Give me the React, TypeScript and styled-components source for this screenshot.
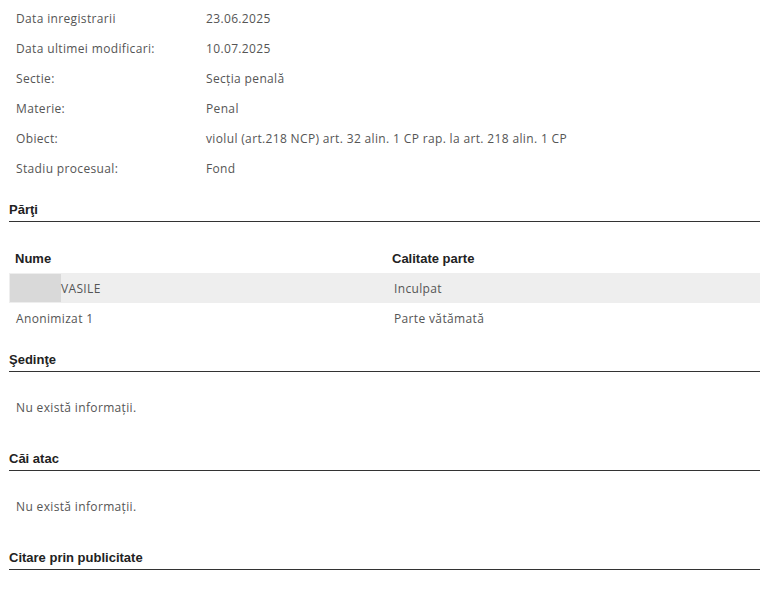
import React from "react";
import styled, { createGlobalStyle } from "styled-components";

const Global = createGlobalStyle`
  html, body { margin: 0; padding: 0; background: #fff; }
  body {
    font-family: "Open Sans", "Noto Sans", sans-serif;
    font-size: 12px;
    letter-spacing: 0.35px;
    color: #555;
  }
`;

const Page = styled.div`
  padding: 3px 0 0 9px;
`;

const InfoGrid = styled.div`
  display: grid;
  grid-template-columns: 190px 1fr;
`;

const InfoCell = styled.div`
  height: 30px;
  padding: 0 7px;
  display: flex;
  align-items: center;
`;

const SectionTitle = styled.h3`
  margin: 19px 0 0;
  padding: 0 0 4px;
  font-family: "Liberation Sans", Arial, sans-serif;
  font-size: 13px;
  line-height: 15px;
  font-weight: bold;
  letter-spacing: 0;
  color: #222;
  border-bottom: 1px solid #333;
`;

const Table = styled.table`
  width: 100%;
  border-collapse: collapse;
  margin-top: 21px;
`;

const Th = styled.th<{ $w?: string }>`
  text-align: left;
  font-family: "Liberation Sans", Arial, sans-serif;
  font-size: 13px;
  font-weight: bold;
  letter-spacing: 0;
  color: #222;
  height: 30px;
  padding: 0 6px;
  vertical-align: middle;
  width: ${(p) => p.$w || "auto"};
`;

const Tr = styled.tr<{ $shade?: boolean }>`
  background: ${(p) => (p.$shade ? "#eee" : "transparent")};
`;

const Td = styled.td<{ $pl?: number }>`
  height: 30px;
  padding: 0 6px 0 ${(p) => (p.$pl ?? 7)}px;
  vertical-align: middle;
`;

const Redacted = styled.span`
  display: inline-block;
  width: 51px;
  height: 28px;
  background: #d9d9d9;
`;

const NameCell = styled.div`
  display: flex;
  align-items: center;
  margin-left: -6px;
`;

const Empty = styled.div`
  margin: 20px 0 29px;
  padding: 0 7px;
  height: 30px;
  display: flex;
  align-items: center;
`;

const info: [string, string][] = [
  ["Data inregistrarii", "23.06.2025"],
  ["Data ultimei modificari:", "10.07.2025"],
  ["Sectie:", "Secția penală"],
  ["Materie:", "Penal"],
  ["Obiect:", "violul (art.218 NCP) art. 32 alin. 1 CP rap. la art. 218 alin. 1 CP"],
  ["Stadiu procesual:", "Fond"],
];

export default function App() {
  return (
    <Page>
      <Global />
      <InfoGrid>
        {info.map(([k, v]) => (
          <React.Fragment key={k}>
            <InfoCell>{k}</InfoCell>
            <InfoCell>{v}</InfoCell>
          </React.Fragment>
        ))}
      </InfoGrid>
      <SectionTitle>Părţi</SectionTitle>
      <Table>
        <thead>
          <tr>
            <Th $w="365px">Nume</Th>
            <Th>Calitate parte</Th>
          </tr>
        </thead>
        <tbody>
          <Tr $shade>
            <Td>
              <NameCell>
                <Redacted />
                <span>VASILE</span>
              </NameCell>
            </Td>
            <Td $pl={8}>Inculpat</Td>
          </Tr>
          <Tr>
            <Td>Anonimizat 1</Td>
            <Td $pl={8}>Parte vătămată</Td>
          </Tr>
        </tbody>
      </Table>
      <SectionTitle>Şedinţe</SectionTitle>
      <Empty>Nu există informații.</Empty>
      <SectionTitle>Căi atac</SectionTitle>
      <Empty>Nu există informații.</Empty>
      <SectionTitle>Citare prin publicitate</SectionTitle>
    </Page>
  );
}
